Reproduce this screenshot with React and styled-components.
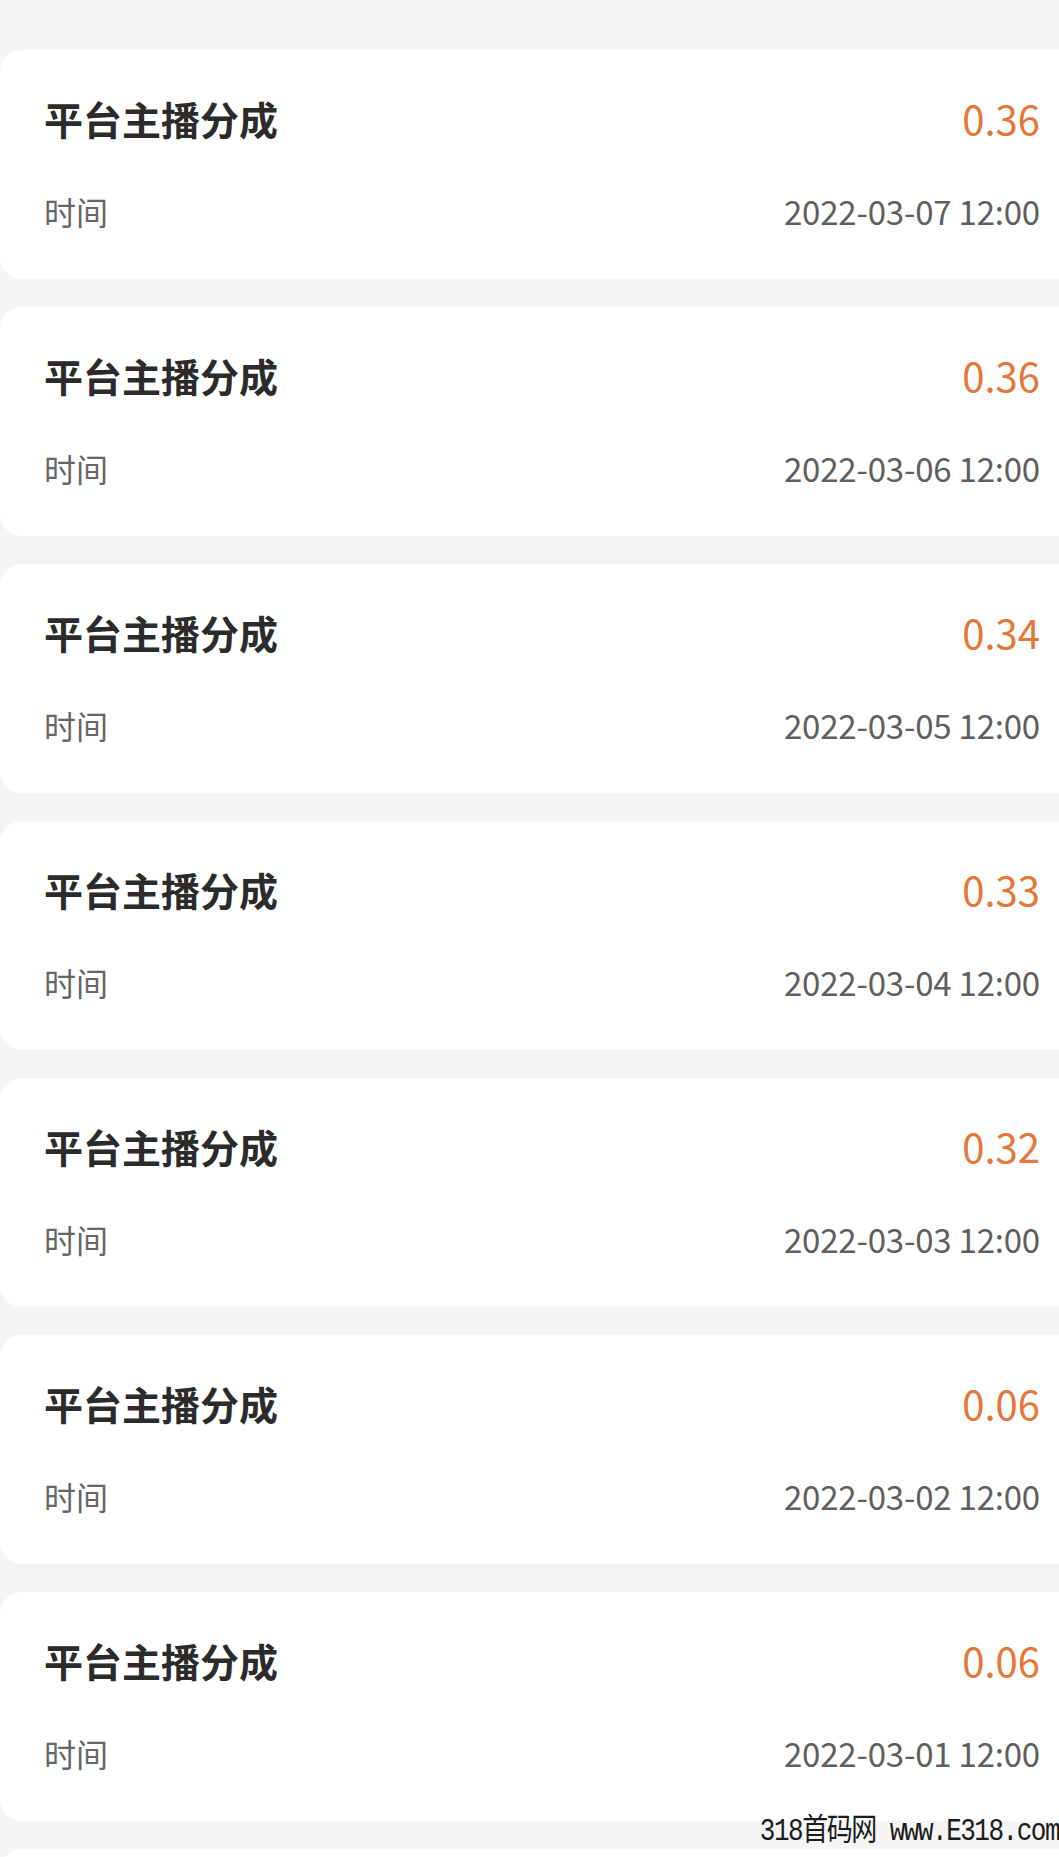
import React from "react";
import styled, { createGlobalStyle } from "styled-components";

const GlobalStyle = createGlobalStyle`
  html, body {
    margin: 0;
    padding: 0;
    background: #f5f5f5;
    overflow: hidden;
  }
  body {
    font-family: "Noto Sans CJK SC", "Noto Sans", sans-serif;
  }
`;

const Page = styled.div`
  position: relative;
  width: 1059px;
  height: 1857px;
  padding-top: 50px;
  box-sizing: border-box;
  display: flex;
  flex-direction: column;
  gap: 28px;
  overflow: hidden;
`;

const Card = styled.div`
  flex-shrink: 0;
  height: 229px;
  box-sizing: border-box;
  background: #ffffff;
  border-radius: 22px 0 0 22px;
  padding: 42px 19px 0 44px;
  display: flex;
  flex-direction: column;
  gap: 45px;
`;

const Row = styled.div`
  display: flex;
  align-items: center;
  justify-content: space-between;
  height: ${(props) => (props.type === "head" ? "52px" : "44px")};
`;

const Title = styled.span`
  font-size: 39px;
  font-weight: 700;
  color: #2b2b2b;
`;

const Amount = styled.span`
  font-size: 40px;
  font-weight: 400;
  color: #e4773a;
`;

const Label = styled.span`
  font-size: 32px;
  color: #666666;
`;

const DateText = styled.span`
  font-size: 33px;
  color: #5f5f5f;
  letter-spacing: -0.2px;
`;

const Watermark = styled.div`
  position: absolute;
  right: 0;
  bottom: 10px;
  font-family: "Liberation Mono", "Noto Sans CJK SC", monospace;
  font-size: 26px;
  line-height: 26px;
  color: #1c1c1c;
  letter-spacing: -1.5px;
  white-space: nowrap;
  transform: scaleY(1.2);
  transform-origin: bottom right;
`;

const records = [
  { amount: "0.36", date: "2022-03-07 12:00" },
  { amount: "0.36", date: "2022-03-06 12:00" },
  { amount: "0.34", date: "2022-03-05 12:00" },
  { amount: "0.33", date: "2022-03-04 12:00" },
  { amount: "0.32", date: "2022-03-03 12:00" },
  { amount: "0.06", date: "2022-03-02 12:00" },
  { amount: "0.06", date: "2022-03-01 12:00" },
];

function App() {
  return (
    <>
      <GlobalStyle />
      <Page>
        {records.map((item, i) => (
          <Card key={i}>
            <Row type="head">
              <Title>平台主播分成</Title>
              <Amount>{item.amount}</Amount>
            </Row>
            <Row>
              <Label>时间</Label>
              <DateText>{item.date}</DateText>
            </Row>
          </Card>
        ))}
        {/* next record, only its top edge is on screen */}
        <Card />
        <Watermark>318首码网 www.E318.com</Watermark>
      </Page>
    </>
  );
}

export default App;
